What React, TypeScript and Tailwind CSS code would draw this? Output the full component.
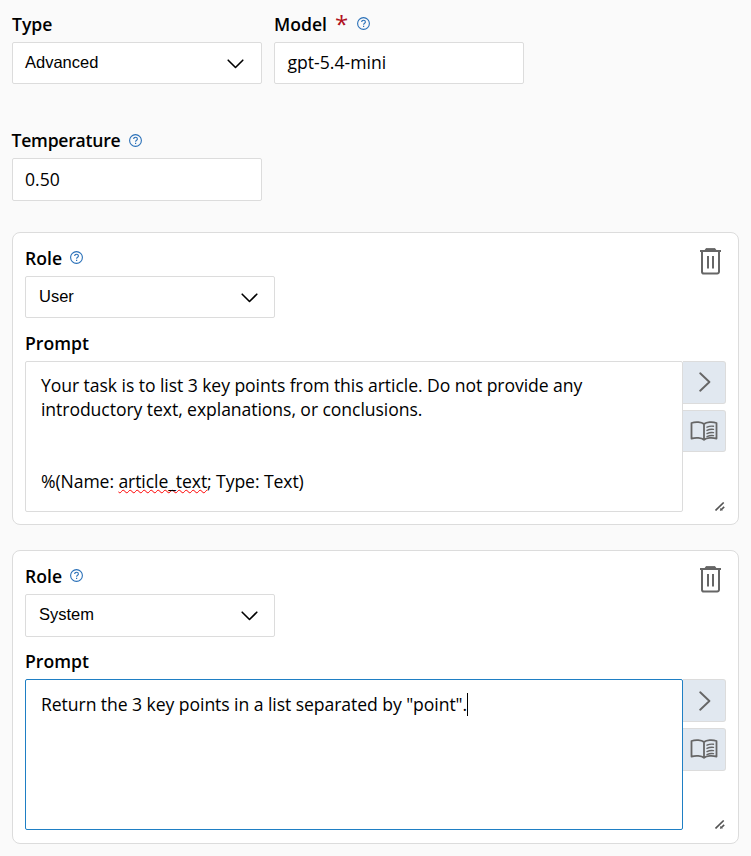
import React from "react";

const Help = () => (
  <svg className="h-[13px] w-[13px] shrink-0" viewBox="0 0 13 13" fill="none" stroke="#2a70b8">
    <circle cx="6.5" cy="6.5" r="5.9" strokeWidth="1.1" />
    <path d="M4.7 5C4.7 3.9 5.4 3.3 6.5 3.3s1.9.6 1.9 1.6c0 1.3-1.8 1.4-1.8 2.8" strokeWidth="1.1" />
    <path d="M6.6 8.8v1.2" strokeWidth="1.2" />
  </svg>
);

const Chevron = () => (
  <svg className="mt-[1px] h-[10px] w-[17px]" viewBox="0 0 17 10" fill="none" stroke="#000" strokeWidth="1.6" strokeLinecap="round" strokeLinejoin="round">
    <path d="M1.2 1.2l7.3 7.3 7.3-7.3" />
  </svg>
);

const Trash = () => (
  <svg className="h-[28px] w-[22px]" viewBox="0 0 22 28" fill="none" stroke="#666" strokeWidth="2">
    <path d="M0 4h21" />
    <path d="M5 3.2l1-1.7h9l1 1.7z" fill="#666" strokeWidth="0.8" />
    <path d="M2 4v20.8a1.8 1.8 0 0 0 1.8 1.8h13.4a1.8 1.8 0 0 0 1.8-1.8V4" />
    <path d="M8 9v12.500M13 9v12.500" />
  </svg>
);

const Right = () => (
  <svg className="h-[20px] w-[12px]" viewBox="0 0 12 20" fill="none" stroke="#666" strokeWidth="1.9" strokeLinecap="round" strokeLinejoin="round">
    <path d="M1.2 1.3l9.2 8.7-9.2 8.7" />
  </svg>
);

const Book = () => (
  <svg className="h-[20px] w-[28px]" viewBox="0 0 28 20" fill="none" stroke="#666" strokeWidth="1.8" strokeLinecap="round" strokeLinejoin="round">
    <path d="M14 3C11.5 1 5.5.6 1.5 2v15.6c4-1.2 10-.9 12.5 1.1 2.5-2 8.5-2.3 12.5-1.1V2C22.5.6 16.5 1 14 3zM14 3v15.5" />
    <path d="M17 6.2c2-1 4-1.3 6.5-1M17 9.4c2-1 4-1.3 6.5-1M17 12.6c2-1 4-1.3 6.5-1M17 15.6c2-1 4-1.3 6.5-1" strokeWidth="1.4" />
  </svg>
);

const Grip = () => (
  <svg className="h-[9px] w-[10px]" viewBox="0 0 10 9" fill="none" stroke="#555" strokeWidth="1.6">
    <path d="M0.5 8.5L8.7 0.5M5.3 8.5L9.2 4.9" />
    <path d="M5 6.6l2.5 1.6" strokeWidth="1" />
  </svg>
);

function Label({ text, help, required, tight }: { text: string; help?: boolean; required?: boolean; tight?: boolean }) {
  return (
    <div className="flex h-6 items-center text-[17.6px] leading-6 font-semibold whitespace-nowrap">
      <span className={tight ? "-ml-[0.5px] tracking-[-0.24px]" : ""}>{text}</span>
      {required && <span className="ml-[8px] text-[24px] leading-6 font-medium text-[#b01020]">*</span>}
      {help && <span className={`${tight ? "mt-[1px]" : "-mt-[1px]"} ${required || tight ? "ml-[9px]" : "ml-[8px]"}`}><Help /></span>}
    </div>
  );
}

function Select({ value, tall, inset }: { value: string; tall?: boolean; inset?: boolean }) {
  return (
    <div className={`flex w-[250px] items-center justify-between rounded-[2px] border border-[#dcdcdc] bg-white font-['Liberation_Sans',Arial,sans-serif] text-[16.5px] ${inset ? "pr-[16px] pl-[13px]" : "pr-[17px] pl-[12px]"} ${tall ? "h-[43px]" : "h-[42px]"}`}>
      <span className="-mt-[2px]">{value}</span>
      <Chevron />
    </div>
  );
}

function Input({ value, tall }: { value: string; tall?: boolean }) {
  return (
    <div className={`flex w-[250px] items-center rounded-[2px] border border-[#dcdcdc] bg-white text-[17.6px] ${tall ? "h-[43px] px-[12px]" : "h-[42px] px-[12.5px] pb-[2px]"}`}>{value}</div>
  );
}

function Card({ role, tall, active, children }: { role: string; tall?: boolean; active?: boolean; children: React.ReactNode }) {
  return (
    <section className={`w-[727px] rounded-[8px] border border-[#dcdcdc] bg-white px-[12px] pt-[13px] ${tall ? "h-[294px]" : "h-[293px]"}`}>
      <div className="flex justify-between">
        <div>
          <Label text="Role" help />
          <div className="mt-[6px]"><Select value={role} tall={tall} inset /></div>
        </div>
        <div className="mt-[1px] mr-[4px]"><Trash /></div>
      </div>
      <div className={tall ? "mt-[12px]" : "mt-[13px]"}><Label text="Prompt" /></div>
      <div className="mt-[6px] flex">
        <div className={`h-[151px] w-[658px] rounded-[2px] border px-[15px] text-[17.6px] leading-6 tracking-[-0.07px] ${active ? "border-[#1f7fc4] pt-[12px]" : "border-[#dcdcdc] pt-[11px]"}`}>
          {children}
        </div>
        <div className="flex w-[43px] flex-col">
          <div className={`flex h-[43px] items-center justify-center rounded-r-[3px] border border-l-0 border-[#dcdcdc] bg-[#e1e8f0] pl-[2px] ${tall ? "pt-[1px]" : "pb-[1px]"}`}><Right /></div>
          <div className={`mt-[6px] flex items-center justify-center rounded-r-[3px] border border-l-0 border-[#dcdcdc] bg-[#e1e8f0] ${tall ? "h-[43px] pb-[1px]" : "h-[42px]"}`}><Book /></div>
          <div className={`mr-[1px] ml-auto ${tall ? "mt-[49px]" : "mt-[50px]"}`}><Grip /></div>
        </div>
      </div>
    </section>
  );
}

export default function App() {
  return (
    <main className="h-[856px] w-[751px] overflow-hidden bg-[#fafafa] pt-[12px] pl-[12px] font-['Open_Sans','Noto_Sans',sans-serif] text-black">
      <div className="flex gap-[12px]">
        <div><Label text="Type" /><div className="mt-[6px]"><Select value="Advanced" /></div></div>
        <div><Label text="Model" required help /><div className="mt-[6px]"><Input value="gpt-5.4-mini" /></div></div>
      </div>
      <div className="mt-[44px]"><Label text="Temperature" help tight /></div>
      <div className="mt-[6px]"><Input value="0.50" tall /></div>
      <div className="mt-[31px] flex flex-col gap-[25px]">
        <Card role="User">
          <p>Your task is to list 3 key points from this article. Do not provide any<br />introductory text, explanations, or conclusions.</p>
          <p className="mt-12 tracking-[-0.09px]">%(Name: <span className="underline decoration-[#f00] decoration-wavy decoration-[1.3px] underline-offset-[1px] [text-decoration-skip-ink:none]">article_text</span>; Type: Text)</p>
        </Card>
        <Card role="System" tall active>
          <p className="flex items-center">Return the 3 key points in a list separated by "point".<span className="h-[23px] w-px bg-black" /></p>
        </Card>
      </div>
    </main>
  );
}
